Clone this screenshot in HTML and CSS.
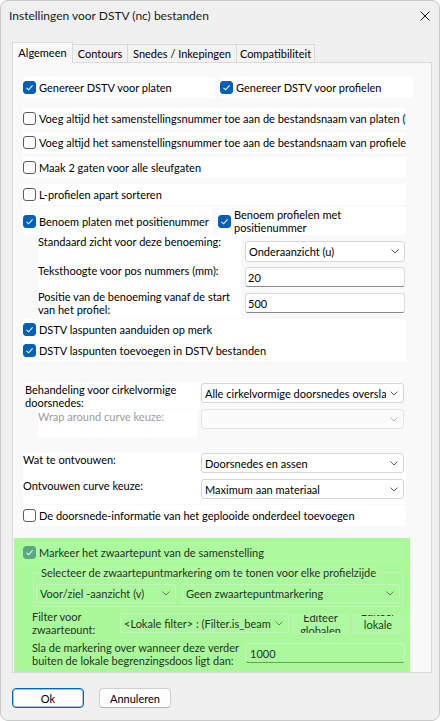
FILE: index.html
```html
<!DOCTYPE html>
<html>
<head>
<meta charset="utf-8">
<link rel="stylesheet" href="styles.css">
</head>
<body>
<div class="window">
  <div class="titlebar">
    <span class="title">Instellingen voor DSTV (nc) bestanden</span>
    <svg class="close" width="10" height="10" viewBox="0 0 10 10"><path d="M0.5 0.5 L9.5 9.5 M9.5 0.5 L0.5 9.5" stroke="#1a1a1a" stroke-width="1" fill="none"/></svg>
  </div>

  <div class="tabs">
    <div class="tab active t1">Algemeen</div>
    <div class="tab t2">Contours</div>
    <div class="tab t3">Snedes / Inkepingen</div>
    <div class="tab t4">Compatibiliteit</div>
  </div>

  <div class="panel">
    <div class="row ra">
      <div class="box cb w192"><span class="chk on"><svg width="13" height="13" viewBox="0 0 13 13"><path d="M3.5 6.8 L5.6 8.8 L9.6 4.4" stroke="#fff" stroke-width="1.1" fill="none"/></svg></span>Genereer DSTV voor platen</div>
      <div class="box cb w193"><span class="chk on"><svg width="13" height="13" viewBox="0 0 13 13"><path d="M3.5 6.8 L5.6 8.8 L9.6 4.4" stroke="#fff" stroke-width="1.1" fill="none"/></svg></span>Genereer DSTV voor profielen</div>
    </div>
    <div class="box cb full rb"><span class="chk"></span>Voeg altijd het samenstellingsnummer toe aan de bestandsnaam van platen (kopnummer)</div>
    <div class="box cb full rc"><span class="chk"></span>Voeg altijd het samenstellingsnummer toe aan de bestandsnaam van profielen (kopnummer)</div>
    <div class="box cb full rd"><span class="chk"></span>Maak 2 gaten voor alle sleufgaten</div>
    <div class="box cb full re"><span class="chk"></span>L-profielen apart sorteren</div>
    <div class="row rf">
      <div class="box cb w189"><span class="chk on"><svg width="13" height="13" viewBox="0 0 13 13"><path d="M3.5 6.8 L5.6 8.8 L9.6 4.4" stroke="#fff" stroke-width="1.1" fill="none"/></svg></span>Benoem platen met positienummer</div>
      <div class="box cb w188 wrap"><span class="chk on"><svg width="13" height="13" viewBox="0 0 13 13"><path d="M3.5 6.8 L5.6 8.8 L9.6 4.4" stroke="#fff" stroke-width="1.1" fill="none"/></svg></span><span class="wraptext">Benoem profielen met positienummer</span></div>
    </div>

    <div class="grid-g">
      <div class="lbl white g1">Standaard zicht voor deze benoeming:</div>
      <div class="combo g1c"><span>Onderaanzicht (u)</span><svg class="chev" width="8" height="5" viewBox="0 0 8 5"><path d="M0.5 0.5 L4 4 L7.5 0.5" stroke="#5f5f5f" fill="none"/></svg></div>
      <div class="lbl white">Teksthoogte voor pos nummers (mm):</div>
      <div class="input gi">20</div>
      <div class="lbl white">Positie van de benoeming vanaf de start<br>van het profiel:</div>
      <div class="input gi">500</div>
    </div>

    <div class="box cb full rh"><span class="chk on"><svg width="13" height="13" viewBox="0 0 13 13"><path d="M3.5 6.8 L5.6 8.8 L9.6 4.4" stroke="#fff" stroke-width="1.1" fill="none"/></svg></span>DSTV laspunten aanduiden op merk</div>
    <div class="box cb full ri"><span class="chk on"><svg width="13" height="13" viewBox="0 0 13 13"><path d="M3.5 6.8 L5.6 8.8 L9.6 4.4" stroke="#fff" stroke-width="1.1" fill="none"/></svg></span>DSTV laspunten toevoegen in DSTV bestanden</div>

    <div class="row rj">
      <div class="lbl white jl">Behandeling voor cirkelvormige<br>doorsnedes:</div>
      <div class="combo jc"><span class="clip">Alle cirkelvormige doorsnedes overslaan</span><svg class="chev" width="8" height="5" viewBox="0 0 8 5"><path d="M0.5 0.5 L4 4 L7.5 0.5" stroke="#5f5f5f" fill="none"/></svg></div>
    </div>
    <div class="row rk">
      <div class="lbl white kl disabled">Wrap around curve keuze:</div>
      <div class="combo kc dis"><span></span><svg class="chev" width="8" height="5" viewBox="0 0 8 5"><path d="M0.5 0.5 L4 4 L7.5 0.5" stroke="#b5b5b5" fill="none"/></svg></div>
    </div>

    <div class="grid-l white">
      <div class="lbl">Wat te ontvouwen:</div>
      <div class="combo lc"><span>Doorsnedes en assen</span><svg class="chev" width="8" height="5" viewBox="0 0 8 5"><path d="M0.5 0.5 L4 4 L7.5 0.5" stroke="#5f5f5f" fill="none"/></svg></div>
      <div class="lbl">Ontvouwen curve keuze:</div>
      <div class="combo lc"><span>Maximum aan materiaal</span><svg class="chev" width="8" height="5" viewBox="0 0 8 5"><path d="M0.5 0.5 L4 4 L7.5 0.5" stroke="#5f5f5f" fill="none"/></svg></div>
    </div>
    <div class="box cb full rm"><span class="chk"></span>De doorsnede-informatie van het geplooide onderdeel toevoegen</div>

    <div class="green">
      <div class="gcb"><span class="chk gon"><svg width="13" height="13" viewBox="0 0 13 13"><path d="M3.5 6.8 L5.6 8.8 L9.6 4.4" stroke="#e8fbe4" stroke-width="1.1" fill="none"/></svg></span>Markeer het zwaartepunt van de samenstelling</div>
      <fieldset class="group">
        <legend>Selecteer de zwaartepuntmarkering om te tonen voor elke profielzijde</legend>
        <div class="grow">
          <div class="combo gcombo c140"><span>Voor/ziel -aanzicht (v)</span><svg class="chev" width="8" height="5" viewBox="0 0 8 5"><path d="M0.5 0.5 L4 4 L7.5 0.5" stroke="#5e8a57" fill="none"/></svg></div>
          <div class="combo gcombo c218"><span>Geen zwaartepuntmarkering</span><svg class="chev" width="8" height="5" viewBox="0 0 8 5"><path d="M0.5 0.5 L4 4 L7.5 0.5" stroke="#5e8a57" fill="none"/></svg></div>
        </div>
      </fieldset>
      <div class="frow">
        <div class="flbl">Filter voor<br>zwaartepunt:</div>
        <div class="combo gcombo fc"><span class="clip">&lt;Lokale filter&gt; : (Filter.is_beam)</span><svg class="chev" width="8" height="5" viewBox="0 0 8 5"><path d="M0.5 0.5 L4 4 L7.5 0.5" stroke="#5e8a57" fill="none"/></svg></div>
        <div class="gbtn b59"><span>Editeer globalen</span></div>
        <div class="gbtn b52"><span>Editeer lokale filter</span></div>
      </div>
      <div class="srow">
        <div class="slbl">Sla de markering over wanneer deze verder<br>buiten de lokale begrenzingsdoos ligt dan:</div>
        <div class="input ginput">1000</div>
      </div>
    </div>
  </div>

  <div class="footer">
    <div class="btn default">Ok</div>
    <div class="btn">Annuleren</div>
  </div>
</div>
</body>
</html>
```
FILE: styles.css
```css
* { box-sizing: border-box; }
html, body { margin: 0; padding: 0; background: #ffffff; }
body {
  font-family: Lato, "Liberation Sans", sans-serif;
  font-size: 11px;
  line-height: 13px;
  color: #000;
}
.window {
  width: 440px;
  height: 721px;
  background: #f0f0f0;
  border: 1px solid #c9c9c9;
  border-radius: 8px;
  overflow: hidden;
  display: flex;
  flex-direction: column;
}
.titlebar {
  height: 29px;
  flex: none;
  display: flex;
  align-items: center;
  justify-content: space-between;
  padding: 0 9px 0 8px;
}
.title { font-size: 12px; line-height: 15px; color: #1a1a1a; }
.close { display: block; }

/* tabs */
.tabs {
  flex: none;
  display: flex;
  align-items: flex-end;
  height: 20px;
  margin: 12px 0 0 11px;
  position: relative;
  z-index: 2;
}
.tab {
  height: 18px;
  background: #f3f3f3;
  border: 1px solid #dadada;
  border-bottom: none;
  border-left: none;
  display: flex;
  align-items: center;
  justify-content: center;
  color: #000;
}
.tab.active {
  height: 21px;
  margin-bottom: -1px;
  background: #f9f9f9;
  border-left: 1px solid #dadada;
  padding-bottom: 1px;
}
.t1 { width: 61px; }
.t2 { width: 55px; }
.t3 { width: 109px; }
.t4 { width: 78px; }

/* panel */
.panel {
  flex: none;
  margin-left: 11px;
  width: 420px;
  height: 611px;
  background: #f9f9f9;
  border: 1px solid #dadada;
  padding-left: 10px;
  display: flex;
  flex-direction: column;
  align-items: flex-start;
}
.row { display: flex; flex: none; }
.box {
  background: #fff;
  height: 21px;
  flex: none;
  white-space: nowrap;
  overflow: hidden;
}
.white { background: #fff; }
.cb { display: flex; align-items: center; }
.full { width: 383px; }
.w192 { width: 192px; }
.w193 { width: 193px; margin-left: 5px; }
.w189 { width: 189px; height: 28px; }
.w188 { width: 188px; height: 28px; margin-left: 6px; white-space: normal; }
.wraptext { display: block; }

.chk {
  width: 13px;
  height: 13px;
  flex: none;
  border-radius: 3px;
  border: 1px solid #5d5d5d;
  background: #fdfdfd;
  margin-right: 3px;
  display: block;
  position: relative;
}
.chk svg { display: block; position: absolute; left: -1px; top: -1px; }
.chk.on { background: #005fb8; border-color: #005fb8; }
.chk.gon { background: #5aa985; border-color: #5aa985; }

.ra { margin-top: 14px; }
.rb { margin-top: 10px; }
.rc { margin-top: 3px; }
.rd { margin-top: 4px; }
.re { margin-top: 6px; }
.rf { margin-top: 2px; }

.grid-g {
  flex: none;
  margin-left: 15px;
  height: 83px;
  display: grid;
  grid-template-columns: 203px 160px;
  grid-template-rows: 29px 26px 28px;
  column-gap: 4px;
}
.lbl { white-space: nowrap; overflow: hidden; }
.g1c { margin-top: 6px; height: 21px; }
.gi { margin-top: 3px; height: 20px; }

.combo {
  background: #fff;
  border: 1px solid #d6d6d6;
  border-radius: 3px;
  display: flex;
  align-items: center;
  justify-content: space-between;
  padding: 0 5px 0 3px;
  white-space: nowrap;
  overflow: hidden;
}
.combo .clip { overflow: hidden; flex: 1; min-width: 0; }
.chev { display: block; flex: none; margin-left: 4px; }
.combo.dis { background: #fbfbfb; border-color: #e3e3e3; }

.input {
  background: #fff;
  border: 1px solid #dcdcdc;
  border-bottom-color: #8a8a8a;
  border-radius: 3px;
  padding-left: 2px;
  display: flex;
  align-items: center;
}

.rh { margin-top: 1px; }

.rj { margin-top: 22px; height: 26px; }
.jl { margin-left: 2px; width: 175px; height: 26px; }
.jc { margin-left: 1px; width: 203px; height: 20px; }
.rk { height: 28px; }
.kl { margin-left: 15px; margin-top: 1px; width: 159px; height: 27px; }
.disabled { color: #9d9d9d; }
.kc { margin-left: 4px; width: 203px; height: 20px; }

.grid-l {
  flex: none;
  margin-top: 16px;
  width: 383px;
  height: 51px;
  display: grid;
  grid-template-columns: 178px 203px;
  grid-template-rows: 26px 25px;
}
.lc { height: 20px; }
.rm { margin-top: 1px; }

/* green highlighted area */
.green {
  flex: none;
  margin-top: 12px;
  margin-left: -9px;
  width: 396px;
  height: 134px;
  background: #a9f99b;
  color: #263325;
  display: flex;
  flex-direction: column;
  align-items: flex-start;
}
.gcb {
  margin: 3px 0 0 9px;
  width: 380px;
  height: 22px;
  display: flex;
  align-items: center;
  background: #abfa9e;
  white-space: nowrap;
}
.group {
  margin: 3px 0 0 19px;
  width: 370px;
  border: 1px solid #c5f0bb;
  padding: 0 0 3px 2px;
  min-inline-size: 0;
}
.group legend {
  margin-left: 4px;
  padding: 0 1px;
  line-height: 13px;
  background: #affaa2;
  white-space: nowrap;
}
.grow { display: flex; margin-top: 5px; }
.gcombo {
  background: #aaf99c;
  border-color: #c6f3bd;
  height: 19px;
}
.c140 { width: 140px; }
.c218 { width: 218px; margin-left: 6px; }
.frow { display: flex; margin-top: 3px; height: 24px; align-items: flex-start; }
.flbl { margin-left: 18px; width: 88px; height: 24px; overflow: hidden; white-space: nowrap; }
.fc { width: 169px; height: 20px; margin-top: 3px; }
.gbtn {
  margin-top: 4px;
  margin-left: 2px;
  height: 20px;
  border: 1px solid #c3eeb9;
  border-radius: 3px;
  background: #adfaa0;
  overflow: hidden;
  display: flex;
  align-items: center;
  justify-content: center;
  text-align: center;
  line-height: 13px;
}
.b59 { width: 59px; }
.b52 { width: 52px; }
.gbtn span { display: block; flex: none; width: 100%; }
.srow { display: flex; margin-top: 7px; align-items: flex-start; }
.slbl { margin-left: 18px; width: 213px; white-space: nowrap; overflow: hidden; }
.ginput {
  margin-top: 2px;
  width: 160px;
  height: 20px;
  background: #aaf99c;
  border-color: #c6f3bd;
  border-bottom-color: #6c9c64;
  padding-left: 4px;
}

/* footer */
.footer {
  flex: none;
  display: flex;
  margin: 15px 0 0 11px;
  gap: 15px;
}
.btn {
  width: 72px;
  height: 20px;
  border: 1px solid #d0d0d0;
  border-bottom-color: #b3b3b3;
  border-radius: 4px;
  background: #fdfdfd;
  display: flex;
  align-items: center;
  justify-content: center;
}
.btn.default {
  border: 1px solid #005fb8;
  box-shadow: inset 0 0 0 1px rgba(0, 95, 184, 0.35);
}
```
